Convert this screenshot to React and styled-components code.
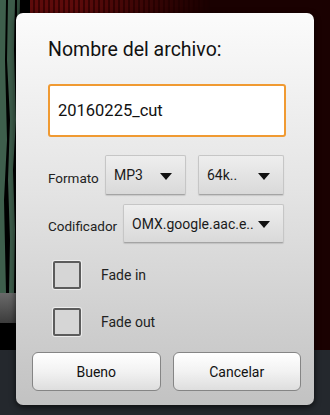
import React from "react";
import styled, { createGlobalStyle } from "styled-components";

const Global = createGlobalStyle`
  html, body { margin: 0; padding: 0; }
  body { font-family: Roboto, "Liberation Sans", sans-serif; }
`;

const Screen = styled.div`
  position: relative;
  width: 330px;
  height: 415px;
  overflow: hidden;
  display: flex;
  flex-direction: column;
  background: #24282d;
`;

const Upper = styled.div`
  height: 350px;
  display: flex;
`;

const TrackColumn = styled.div`
  width: 30px;
  display: flex;
  flex-direction: column;
  background: #000;
`;

const Wave = styled.svg`
  display: block;
  width: 30px;
  height: 293px;
`;

const GreyBar = styled.div`
  height: 30px;
  background: linear-gradient(#6a6a6a, #3c3c3c);
`;

const RedArea = styled.div`
  flex: 1;
  display: flex;
  flex-direction: column;
  background: #1a0101;
`;

const RedStrip = styled.div`
  height: 13px;
  background: repeating-linear-gradient(90deg, #5e0b0b 0 3px, #3a0303 3px 5px);
  mask-image: linear-gradient(90deg, #000 0%, #000 15%, transparent 60%);
`;

const Dialog = styled.div`
  position: absolute;
  left: 16px;
  top: 13px;
  width: 298px;
  height: 392px;
  box-sizing: border-box;
  border-radius: 7px;
  background: linear-gradient(#fbfbfb 0%, #e4e4e4 45%, #c2c2c2 100%);
  box-shadow: 0 2px 6px rgba(0, 0, 0, 0.7);
  padding: 25px 13px 14px 16px;
  display: flex;
  flex-direction: column;
`;

const Body = styled.div`
  padding-left: 16px;
  display: flex;
  flex-direction: column;
`;

const Title = styled.div`
  font-size: 19.5px;
  line-height: 24px;
  color: #111;
`;

const NameInput = styled.div`
  margin-top: 22px;
  width: 238px;
  height: 53px;
  box-sizing: border-box;
  border: 2px solid #f09a32;
  border-radius: 3px;
  background: #fff;
  padding-left: 8px;
  display: flex;
  align-items: center;
  font-size: 16.5px;
  color: #111;
`;

const Row = styled.div`
  display: flex;
  align-items: center;
  margin-top: ${p => p.$top}px;
`;

const Label = styled.span`
  font-size: 13.5px;
  color: #222;
  padding-top: 5px;
  width: ${p => p.$w}px;
`;

const Spinner = styled.div`
  width: ${p => p.$w}px;
  height: ${p => p.$h}px;
  margin-left: ${p => p.$gap || 0}px;
  box-sizing: border-box;
  border: 1px solid #c6c6c6;
  border-bottom-color: #a4a4a4;
  border-radius: 2px;
  background: linear-gradient(#eeeeee, #d9d9d9);
  box-shadow: 0 1px 1px rgba(0, 0, 0, 0.12);
  display: flex;
  align-items: center;
  justify-content: space-between;
  padding: 0 13px 0 8px;
  font-size: 14px;
  color: #1a1a1a;
`;

const Arrow = styled.span`
  width: 0;
  height: 0;
  border-left: 6.5px solid transparent;
  border-right: 6.5px solid transparent;
  border-top: 7px solid #111;
  margin-top: 2px;
`;

const CheckRow = styled.div`
  display: flex;
  align-items: center;
  margin-top: ${p => p.$top}px;
  padding-left: 5px;
`;

const Box = styled.span`
  width: 28px;
  height: 28px;
  box-sizing: border-box;
  border: 2px solid #5c5c5c;
  border-radius: 2px;
  background: #d6d6d6;
  box-shadow: 0 0 0 1px rgba(255, 255, 255, 0.6);
`;

const CheckText = styled.span`
  margin-left: 20px;
  font-size: 14px;
  color: #222;
`;

const Buttons = styled.div`
  margin-top: auto;
  display: flex;
  gap: 12px;
`;

const Button = styled.div`
  width: 129px;
  height: 39px;
  box-sizing: border-box;
  border: 1px solid #858585;
  border-radius: 6px;
  background: linear-gradient(#ffffff, #f2f2f2 50%, #dedede);
  display: flex;
  align-items: center;
  justify-content: center;
  font-size: 14px;
  color: #111;
`;

const Waveform = () => (
  <Wave viewBox="0 0 30 293" preserveAspectRatio="none">
    <rect width="30" height="293" fill="#000" />
    <path d="M0 0 H6 L5 60 L7 140 L4 200 L6 293 H0 Z" fill="#3e5f4c" />
    <path d="M8 0 H15 L14 50 L16 120 L13 170 L15 230 L14 293 H9 L10 240 L8 180 L10 120 L7 60 Z" fill="#3c5b49" />
    <path d="M17 0 H20 L19 40 L21 90 L18 150 L19 293 H17 Z" fill="#2f4a3a" />
  </Wave>
);

const App = () => (
  <>
    <Global />
    <Screen>
      <Upper>
        <TrackColumn>
          <Waveform />
          <GreyBar />
        </TrackColumn>
        <RedArea>
          <RedStrip />
        </RedArea>
      </Upper>
      <Dialog>
        <Body>
          <Title>Nombre del archivo:</Title>
          <NameInput>20160225_cut</NameInput>
          <Row $top={18}>
            <Label $w={57}>Formato</Label>
            <Spinner $w={81} $h={40}>MP3<Arrow /></Spinner>
            <Spinner $w={86} $h={40} $gap={12}>64k..<Arrow /></Spinner>
          </Row>
          <Row $top={9}>
            <Label $w={75}>Codificador</Label>
            <Spinner $w={161} $h={39}>OMX.google.aac.e..<Arrow /></Spinner>
          </Row>
          <CheckRow $top={18}>
            <Box />
            <CheckText>Fade in</CheckText>
          </CheckRow>
          <CheckRow $top={19}>
            <Box />
            <CheckText>Fade out</CheckText>
          </CheckRow>
        </Body>
        <Buttons>
          <Button>Bueno</Button>
          <Button>Cancelar</Button>
        </Buttons>
      </Dialog>
    </Screen>
  </>
);

export default App;
